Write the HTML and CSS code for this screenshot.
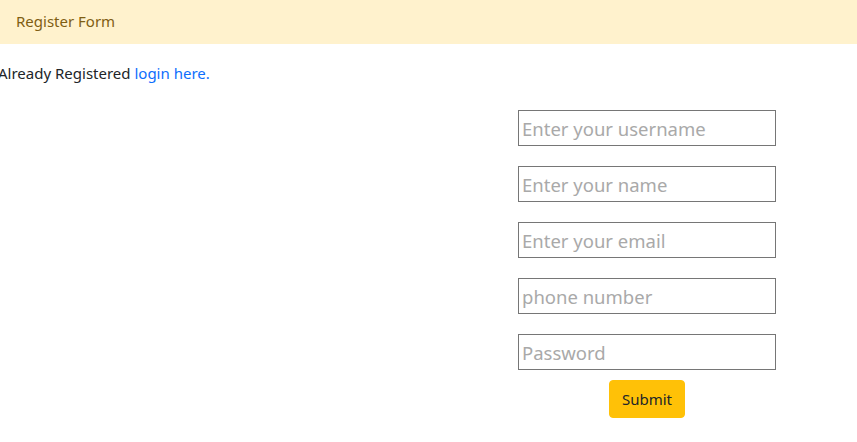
FILE: index.html
```html
<!DOCTYPE html>
<html>
<head>
<meta charset="utf-8">
<link rel="stylesheet" href="styles.css">
</head>
<body>
<div class="card-header">Register Form</div>
<p class="already">Already Registered <a href="#" class="login">login here.</a></p>
<div class="row">
  <form class="form">
    <input class="field" type="text" placeholder="Enter your username">
    <input class="field" type="text" placeholder="Enter your name">
    <input class="field" type="text" placeholder="Enter your email">
    <input class="field" type="text" placeholder="phone number">
    <input class="field" type="password" placeholder="Password">
    <button class="submit" type="button">Submit</button>
  </form>
</div>
</body>
</html>
```
FILE: styles.css
```css
* { box-sizing: border-box; }
body {
  margin: 0;
  font-family: "Noto Sans", sans-serif;
  font-size: 15px;
  color: #212529;
  background: #fff;
}
.card-header {
  height: 44px;
  background: #fff2cd;
  color: #7f5e12;
  padding: 0 16px 2px;
  display: flex;
  align-items: center;
}
.already {
  margin: 19px 0 0 -2px;
  line-height: 20px;
}
.login {
  color: #0d6efd;
  text-decoration: none;
}
.row {
  display: flex;
  justify-content: flex-end;
  padding-right: 81px;
  margin-top: 27px;
}
.form {
  width: 258px;
  display: flex;
  flex-direction: column;
  align-items: center;
}
.field {
  width: 258px;
  height: 36px;
  border: 1px solid #767676;
  padding: 1px 3px;
  font-family: "Noto Sans", sans-serif;
  font-size: 18.5px;
  margin-bottom: 20px;
  color: #212529;
}
.field:last-of-type { margin-bottom: 10px; }
.field::placeholder { color: #a9a9a9; }
.submit {
  width: 76px;
  height: 38px;
  background: #ffc107;
  border: 1px solid #ffc107;
  border-radius: 4px;
  font-family: "Noto Sans", sans-serif;
  font-size: 15px;
  color: #212529;
}
```
